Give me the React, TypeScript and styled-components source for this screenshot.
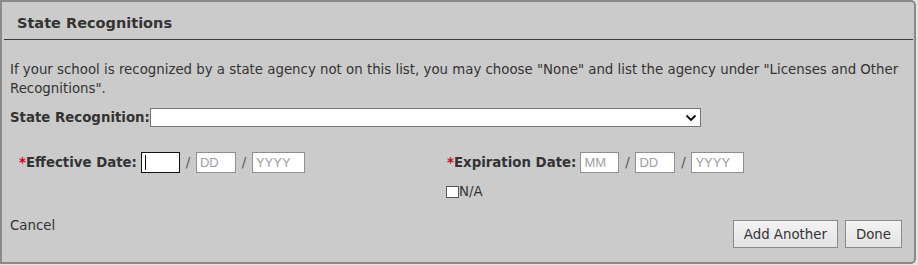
import React from 'react';
import styled, { createGlobalStyle } from 'styled-components';

const GlobalStyle = createGlobalStyle`
  body {
    margin: 0;
    background: #e4e4e4;
    font-family: Verdana, "DejaVu Sans", sans-serif;
  }
`;

const Panel = styled.div`
  box-sizing: border-box;
  width: 916px;
  height: 264px;
  border: 2px solid #8a8a8a;
  border-radius: 0 5px 5px 0;
  background: #cbcbcb;
  color: #333;
  font-size: 13.33px;
  display: flex;
  flex-direction: column;
`;

const Header = styled.div`
  box-sizing: border-box;
  height: 38px;
  margin: 0 1px 0 2px;
  padding: 4px 0 0 13px;
  display: flex;
  align-items: center;
  border-bottom: 1px solid #3a3a3a;
  font-size: 14.5px;
  font-weight: bold;
  color: #333;
`;

const Body = styled.div`
  flex: 1;
  padding: 20px 3px 14px 8px;
  display: flex;
  flex-direction: column;
`;

const Intro = styled.p`
  margin: 0;
  line-height: 19px;
`;

const FieldRow = styled.div`
  margin-top: 10px;
  display: flex;
  align-items: center;
  font-weight: bold;
`;

const Select = styled.div`
  box-sizing: border-box;
  width: 551px;
  height: 19px;
  border: 1px solid #767676;
  background: #fff;
  display: flex;
  align-items: center;
  justify-content: flex-end;
  padding-right: 3px;
`;

const DateGrid = styled.div`
  margin-top: 25px;
  display: grid;
  grid-template-columns: 428px 1fr;
  padding-left: 9px;
  row-gap: 11px;
`;

const DateField = styled.div`
  display: flex;
  align-items: center;
`;

const Label = styled.span`
  font-weight: bold;
  margin-right: 4px;
`;

const Star = styled.span`
  color: #d0021b;
`;

const DateInput = styled.div<{ $w: number; $focused?: boolean }>`
  box-sizing: border-box;
  width: ${p => p.$w}px;
  height: 21px;
  border: 1px solid ${p => (p.$focused ? '#111' : '#8f8f8f')};
  background: #fff;
  color: #a0a0a0;
  font-family: Arial, "Liberation Sans", sans-serif;
  font-size: 13px;
  display: flex;
  align-items: center;
  padding-left: 3px;
`;

const Caret = styled.span`
  width: 1px;
  height: 15px;
  background: #000;
`;

const Slash = styled.span`
  width: 16px;
  text-align: center;
  color: #555;
`;

const Check = styled.label`
  grid-column: 2;
  display: flex;
  align-items: center;
  margin-left: -1px;
`;

const Box = styled.span`
  box-sizing: border-box;
  width: 13px;
  height: 12px;
  border: 1px solid #555;
  background: #fff;
`;

const Footer = styled.div`
  margin-top: auto;
  display: flex;
  align-items: flex-start;
  justify-content: space-between;
  padding-right: 9px;
`;

const Link = styled.span`
  margin-top: -2px;
`;

const Buttons = styled.div`
  display: flex;
  gap: 7px;
`;

const Button = styled.button`
  height: 28px;
  padding: 0 10px;
  border: 1px solid #8a8a8a;
  background: linear-gradient(#f3f3f3, #e3e3e3);
  color: #333;
  font-family: Verdana, "DejaVu Sans", sans-serif;
  font-size: 13.33px;
`;

const Chevron = () => (
  <svg width="12" height="8" viewBox="0 0 12 8">
    <path d="M1.5 1.5 L6 6 L10.5 1.5" fill="none" stroke="#000" strokeWidth="1.8" />
  </svg>
);

const DateParts: React.FC<{ focused?: boolean }> = ({ focused }) => (
  <>
    <DateInput $w={39} $focused={focused}>{focused ? <Caret /> : 'MM'}</DateInput>
    <Slash>/</Slash>
    <DateInput $w={40}>DD</DateInput>
    <Slash>/</Slash>
    <DateInput $w={53}>YYYY</DateInput>
  </>
);

export default function App() {
  return (
    <>
      <GlobalStyle />
      <Panel>
        <Header>State Recognitions</Header>
        <Body>
          <Intro>
            If your school is recognized by a state agency not on this list, you may choose "None" and list the agency under "Licenses and Other Recognitions".
          </Intro>
          <FieldRow>
            State Recognition:
            <Select><Chevron /></Select>
          </FieldRow>
          <DateGrid>
            <DateField>
              <Label><Star>*</Star>Effective Date:</Label>
              <DateParts focused />
            </DateField>
            <DateField>
              <Label><Star>*</Star>Expiration Date:</Label>
              <DateParts />
            </DateField>
            <Check><Box />N/A</Check>
          </DateGrid>
          <Footer>
            <Link>Cancel</Link>
            <Buttons>
              <Button>Add Another</Button>
              <Button>Done</Button>
            </Buttons>
          </Footer>
        </Body>
      </Panel>
    </>
  );
}
